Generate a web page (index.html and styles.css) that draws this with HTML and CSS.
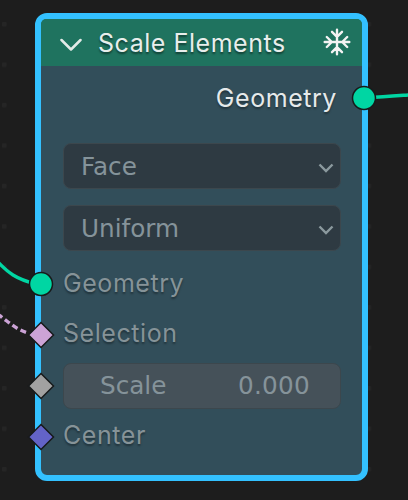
FILE: index.html
```html
<!DOCTYPE html>
<html lang="en">
<head>
<meta charset="utf-8">
<title>Scale Elements</title>
<link rel="stylesheet" href="styles.css">
</head>
<body>
<main class="canvas">
  <svg class="wires" width="408" height="500" viewBox="0 0 408 500" aria-hidden="true">
    <defs>
      <pattern id="grid" x="2" y="22" width="40.5" height="40.45" patternUnits="userSpaceOnUse">
        <rect width="4.5" height="4.5" rx="1" fill="#252525"/>
      </pattern>
    </defs>
    <rect width="405" height="500" fill="url(#grid)"/>
    <g fill="none" stroke-width="3.4">
      <path d="M-4 260C8 273 16 279 36 284" stroke="#00d6a3"/>
      <path d="M-2 314.500C9 322 15 329 28 333" stroke="#cca3d6" stroke-dasharray="6 3.500" stroke-dashoffset="1"/>
      <path d="M368 97.500C382 97 394 96 410 94.800" stroke="#00d6a3"/>
    </g>
  </svg>

  <section class="node">
    <header class="header">
      <svg class="collapse" viewBox="0 0 22 14"><path d="M1.500 2L11 11.500L20.500 2"/></svg>
      <h1 class="title">Scale Elements</h1>
      <svg class="freeze" viewBox="0 0 28 28">
        <path d="M14 1.700V26.300M1.700 14H26.300M9 3.800L14 8.800L19 3.800M9 24.200L14 19.200L19 24.200M3.800 9L8.800 14L3.800 19M24.200 9L19.200 14L24.200 19"/>
      </svg>
    </header>
    <div class="row output">
      <span class="label bright">Geometry</span>
      <svg class="socket right" viewBox="0 0 28 28"><circle cx="14" cy="14" r="11.500" fill="#00d6a3"/></svg>
    </div>
    <div class="field select">
      <span class="value">Face</span>
      <svg class="arrow" viewBox="0 0 16 10"><path d="M1.500 1.500L8 8L14.500 1.500"/></svg>
    </div>
    <div class="field select">
      <span class="value">Uniform</span>
      <svg class="arrow" viewBox="0 0 16 10"><path d="M1.500 1.500L8 8L14.500 1.500"/></svg>
    </div>
    <div class="row geometry">
      <svg class="socket" viewBox="0 0 28 28"><circle cx="14" cy="14" r="11.500" fill="#00d6a3"/></svg>
      <span class="label">Geometry</span>
    </div>
    <div class="row selection">
      <svg class="socket" viewBox="0 0 28 28"><path d="M14 1.500L26.500 14L14 26.500L1.500 14Z" fill="#cca3d6"/></svg>
      <span class="label">Selection</span>
    </div>
    <div class="row scale">
      <svg class="socket" viewBox="0 0 28 28"><path d="M14 1.500L26.500 14L14 26.500L1.500 14Z" fill="#a1a1a1"/></svg>
      <div class="field number"><span class="value">Scale</span><span class="value amount">0.000</span></div>
    </div>
    <div class="row center">
      <svg class="socket" viewBox="0 0 28 28"><path d="M14 1.500L26.500 14L14 26.500L1.500 14Z" fill="#6363c7"/></svg>
      <span class="label">Center</span>
    </div>
  </section>
</main>
</body>
</html>
```

FILE: styles.css
```css
* { box-sizing: border-box; }
body { margin: 0; background: #1d1d1d; }
.canvas {
  position: relative;
  width: 408px;
  height: 500px;
  padding: 13px 0 0 35px;
  overflow: hidden;
  background: #1d1d1d;
}
.wires { position: absolute; left: 0; top: 0; }
.node {
  position: relative;
  width: 333px;
  height: 468px;
  border: 6px solid #33c1ff;
  border-radius: 12px;
  background: #324e5a;
  font-family: "Inter", sans-serif;
}
.header {
  display: flex;
  align-items: center;
  height: 47px;
  padding: 0 11px 0 19px;
  border-radius: 5px 5px 0 0;
  background: #1f735f;
}
.collapse { width: 22px; height: 14px; margin-top: 4px; }
.collapse path, .freeze path {
  fill: none;
  stroke: #e3eae7;
  stroke-width: 2.500;
  stroke-linecap: round;
  stroke-linejoin: round;
}
.freeze path { stroke: #f3f3f3; stroke-width: 2.400; }
.title {
  margin: 1px 0 0 16px;
  color: #e8eeec;
  font-size: 25px;
  font-weight: 400;
  line-height: 30px;
  letter-spacing: .53px;
  white-space: nowrap;
  text-shadow: 0 2px 2px rgba(0, 0, 0, .45);
}
.freeze { width: 28px; height: 28px; margin: -1px 0 0 auto; }
.row {
  position: relative;
  display: flex;
  align-items: center;
  height: 46px;
  padding: 0 22px;
}
.output { height: 64px; margin-bottom: 13px; justify-content: flex-end; padding: 0 25px; }
.label {
  color: #869398;
  font-size: 25px;
  line-height: 30px;
  letter-spacing: .56px;
  text-shadow: 0 2px 2px rgba(0, 0, 0, .35);
}
.bright { color: #e6eaeb; }
.socket {
  position: absolute;
  left: -14.500px;
  top: 50%;
  width: 28px;
  height: 28px;
  margin-top: -14px;
}
.socket.right { left: auto; right: -16.300px; }
.socket > * { stroke: #171a1b; stroke-width: 1.500; }
.field {
  display: flex;
  align-items: center;
  justify-content: space-between;
  width: 278px;
  height: 46px;
  border: 1px solid #3c474d;
  border-radius: 8px;
}
.select { margin: 0 22px 16px; padding: 0 6px 0 17px; background: #2e3a42; }
.value {
  color: #85939a;
  font-family: "DejaVu Sans", sans-serif;
  font-size: 24.700px;
  line-height: 30px;
}
.select .value { margin-top: 2px; }
.amount { letter-spacing: .25px; }
.arrow { width: 16px; height: 10px; margin-top: 3px; }
.arrow path { fill: none; stroke: #8b999e; stroke-width: 2.400; }
.geometry { margin-top: -6px; }
.geometry .label { margin-top: -2px; }
.selection { height: 54px; }
.selection .label, .center .label { margin-top: -3px; }
.selection .socket, .center .socket { margin-top: -13px; }
.scale { height: 50px; }
.number { flex: none; padding: 0 30px 0 36px; background: #455159; }
.center { height: 50px; }
```
